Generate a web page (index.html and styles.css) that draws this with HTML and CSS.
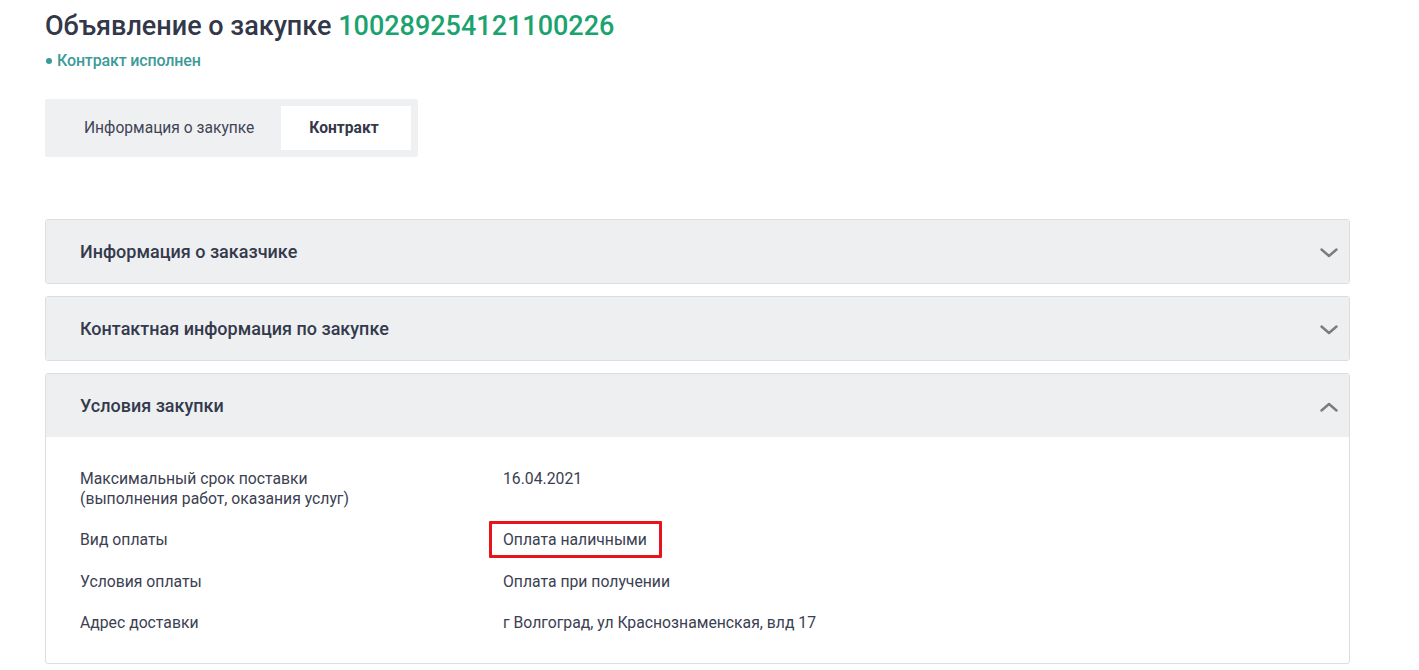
FILE: index.html
```html
<!DOCTYPE html>
<html lang="ru">
<head>
<meta charset="utf-8">
<link rel="stylesheet" href="styles.css">
</head>
<body>
<div class="page">
  <h1 class="title">Объявление о закупке <span class="num">100289254121100226</span></h1>
  <div class="status"><span class="dot"></span>Контракт исполнен</div>
  <div class="tabs">
    <div class="tab">Информация о закупке</div>
    <div class="tab active">Контракт</div>
  </div>
  <div class="accordion">
    <div class="panel">
      <div class="panel-head">
        <span>Информация о заказчике</span>
        <svg class="chev" width="18" height="10" viewBox="0 0 18 10"><path d="M1.5 1.5 L9 8 L16.5 1.5" fill="none" stroke="#7a7c80" stroke-width="2.4" stroke-linecap="round" stroke-linejoin="round"/></svg>
      </div>
    </div>
    <div class="panel">
      <div class="panel-head">
        <span>Контактная информация по закупке</span>
        <svg class="chev" width="18" height="10" viewBox="0 0 18 10"><path d="M1.5 1.5 L9 8 L16.5 1.5" fill="none" stroke="#7a7c80" stroke-width="2.4" stroke-linecap="round" stroke-linejoin="round"/></svg>
      </div>
    </div>
    <div class="panel">
      <div class="panel-head">
        <span>Условия закупки</span>
        <svg class="chev" width="18" height="10" viewBox="0 0 18 10"><path d="M1.5 8.5 L9 2 L16.5 8.5" fill="none" stroke="#7a7c80" stroke-width="2.4" stroke-linecap="round" stroke-linejoin="round"/></svg>
      </div>
      <div class="panel-body">
        <div class="row">
          <div class="label">Максимальный срок поставки<br>(выполнения работ, оказания услуг)</div>
          <div class="value">16.04.2021</div>
        </div>
        <div class="row">
          <div class="label">Вид оплаты</div>
          <div class="value"><span class="marked">Оплата наличными</span></div>
        </div>
        <div class="row">
          <div class="label">Условия оплаты</div>
          <div class="value">Оплата при получении</div>
        </div>
        <div class="row">
          <div class="label">Адрес доставки</div>
          <div class="value">г Волгоград, ул Краснознаменская, влд 17</div>
        </div>
      </div>
    </div>
  </div>
</div>
</body>
</html>
```

FILE: styles.css
```css
* { box-sizing: border-box; }
html, body { margin: 0; padding: 0; background: #fff; }
body {
  font-family: Roboto, "Noto Sans", "Liberation Sans", sans-serif;
  color: #363b4d;
  overflow: hidden;
}
.page {
  width: 1305px;
  margin-left: 45px;
  padding-top: 9px;
}
.title {
  margin: 0;
  font-size: 27px;
  font-weight: 500;
  line-height: 34px;
  color: #323749;
}
.num { color: #1aa36f; }
.status {
  margin-top: 8px;
  font-size: 16px;
  font-weight: 500;
  line-height: 20px;
  color: #3c9a98;
  display: flex;
  align-items: center;
  letter-spacing: -0.15px;
}
.dot {
  width: 6px;
  height: 6px;
  border-radius: 50%;
  background: #3c9a98;
  margin-left: 1px;
  margin-right: 5px;
}
.tabs {
  margin-top: 28px;
  display: inline-flex;
  padding: 7px;
  background: #eff0f2;
  border-radius: 2px;
}
.tab {
  height: 44px;
  display: flex;
  align-items: center;
  font-size: 15.6px;
  color: #3f4455;
  padding: 0 27px 0 32px;
}
.tab.active {
  background: #fff;
  font-weight: 700;
  color: #343849;
  padding: 0 32px 0 28px;
}
.accordion {
  margin-top: 62px;
  display: flex;
  flex-direction: column;
  gap: 12px;
}
.panel {
  border: 1px solid #dcdde0;
  border-radius: 3px;
  overflow: hidden;
  background: #fff;
}
.panel-head {
  height: 63px;
  background: #eeeff1;
  display: flex;
  align-items: center;
  justify-content: space-between;
  padding: 0 11px 0 34px;
  font-size: 18px;
  font-weight: 500;
  color: #343a4c;
}
.chev { display: block; margin-top: 2px; }
.panel-body {
  padding: 32px 34px 30px;
  display: flex;
  flex-direction: column;
  gap: 21.25px;
  font-size: 15.75px;
  line-height: 20px;
  color: #3b4052;
}
.row { display: flex; }
.label { width: 423px; flex: none; }
.value { flex: 1; }
.marked { position: relative; display: inline-block; }
.marked::after {
  content: "";
  position: absolute;
  left: -14px;
  right: -15px;
  top: -9px;
  bottom: -8px;
  border: 3px solid #e8141b;
  border-radius: 1px;
}
```
